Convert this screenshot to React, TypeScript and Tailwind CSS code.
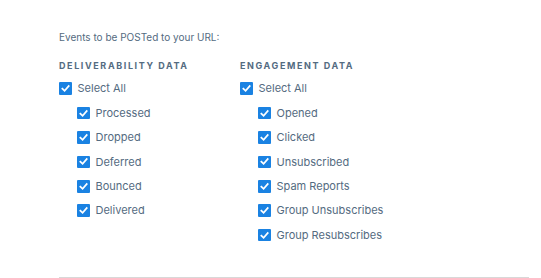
import React from "react";

function Check() {
  return (
    <span className="flex h-[12.5px] w-[12.5px] shrink-0 items-center justify-center rounded-[1px] bg-[#1a82e2]">
      <svg width="9" height="9" viewBox="0 0 10 10" fill="none">
        <path d="M1.5 5.2 L4 7.6 L8.6 2.2" stroke="white" strokeWidth="1.9" strokeLinecap="square" />
      </svg>
    </span>
  );
}

function Row({ label, child }: { label: string; child?: boolean }) {
  return (
    <div className={`flex h-[24.4px] items-center gap-[6px] ${child ? "pl-[18px]" : ""}`}>
      <Check />
      <span className="text-[11px] text-[#546b81]">{label}</span>
    </div>
  );
}

function Column({ title, items }: { title: string; items: string[] }) {
  return (
    <div className="flex flex-col">
      <div className="mb-[4px] text-[9px] font-bold tracking-[1.6px] text-[#546b81]">{title}</div>
      <Row label="Select All" />
      {items.map((i) => (
        <Row key={i} label={i} child />
      ))}
    </div>
  );
}

export default function App() {
  return (
    <div className="h-[278px] w-[541px] bg-white pl-[59px] pr-[12px] pt-[30px]" style={{ fontFamily: "Inter, 'Noto Sans', sans-serif" }}>
      <div className="text-[10px] text-[#546b81]">Events to be POSTed to your URL:</div>
      <div className="mt-[14px] flex gap-0">
        <div className="w-[181px]">
          <Column title="DELIVERABILITY DATA" items={["Processed", "Dropped", "Deferred", "Bounced", "Delivered"]} />
        </div>
        <Column title="ENGAGEMENT DATA" items={["Opened", "Clicked", "Unsubscribed", "Spam Reports", "Group Unsubscribes", "Group Resubscribes"]} />
      </div>
      <div className="mt-[30px] h-px w-[470px] bg-[#d8d8d8]" />
    </div>
  );
}
